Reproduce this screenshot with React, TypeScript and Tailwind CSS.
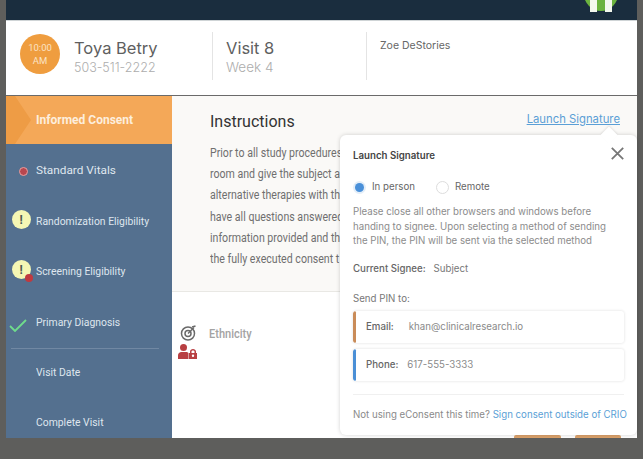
import React from "react"

const poppins = "font-['Inter','Noto_Sans',sans-serif]"

const instructionLines = [
  "Prior to all study procedures",
  "room and give the subject a",
  "alternative therapies with th",
  "have all questions answered",
  "information provided and th",
  "the fully executed consent t",
]

function Warning() {
  return (
    <span className="flex h-[19px] w-[19px] items-center justify-center rounded-full bg-[#f5f7b4] text-[12px] leading-none font-bold text-[#4d5a50]">
      !
    </span>
  )
}

function SideItem({ label, marker, wide }: { label: string; marker?: React.ReactNode; wide?: boolean }) {
  return (
    <div className="relative flex h-[50.4px] items-center pl-[30px] text-[11.8px] text-[#dfe6ee]">
      {marker && <span className="absolute top-0 left-0 flex h-full w-[30px] items-center justify-center">{marker}</span>}
      <span className={wide ? "inline-block" : "inline-block origin-left scale-x-[0.88] whitespace-nowrap"}>{label}</span>
    </div>
  )
}

function PinRow({ label, value, bar, gap }: { label: string; value: string; bar: string; gap: string }) {
  return (
    <div className="flex h-[32px] overflow-hidden rounded-[3px] bg-white shadow-[0_0_3px_rgba(0,0,0,0.14)]">
      <span className={`w-[3px] rounded-[2px] ${bar}`} />
      <div className={`flex items-center pl-[10px] text-[9.7px] ${gap}`}>
        <span className="font-medium text-[#666]">{label}</span>
        <span className="text-[#8a8a8a]">{value}</span>
      </div>
    </div>
  )
}

function Popover() {
  return (
    <div className={`absolute top-[135px] right-0 h-[300px] w-[297px] rounded-[6px] bg-white px-[13px] pt-[14px] shadow-[0_0_4px_rgba(0,0,0,0.18)] ${poppins}`}>
      <span className="absolute -top-[6px] right-[22px] h-[12px] w-[12px] rotate-45 bg-white shadow-[-1px_-1px_2px_rgba(0,0,0,0.08)]" />
      <svg className="absolute top-[12px] right-[13px]" width="13" height="13" viewBox="0 0 13 13" fill="none" stroke="#777" strokeWidth="1.8">
        <path d="M0.8 0.8 12.2 12.2M12.2 0.8 0.8 12.2" />
      </svg>
      <div className="text-[9.7px] leading-[13px] font-semibold text-[#444]">Launch Signature</div>
      <div className="mt-[18px] flex h-[14px] items-center text-[9.7px] text-[#666]">
        <span className="ml-[2px] h-[9px] w-[9px] rounded-full bg-[#4a90d9] shadow-[0_0_0_2px_#e4eef8]" />
        <span className="ml-[8px]">In person</span>
        <span className="ml-[21px] h-[13px] w-[13px] rounded-full border border-[#ddd]" />
        <span className="ml-[6px]">Remote</span>
      </div>
      <p className="mt-[11px] text-[9.7px] leading-[14.6px] whitespace-nowrap text-[#8c8c8c]">
        Please close all other browsers and windows before
        <br />
        handing to signee. Upon selecting a method of sending
        <br />
        the PIN, the PIN will be sent via the selected method
      </p>
      <div className="mt-[13px] flex text-[9.7px] leading-[14px] text-[#777]">
        <span className="font-medium text-[#666]">Current Signee:</span>
        <span className="ml-[8px]">Subject</span>
      </div>
      <div className="mt-[16px] text-[9.7px] leading-[14px] text-[#777]">Send PIN to:</div>
      <div className="mt-[5px] flex flex-col gap-[6px]">
        <PinRow label="Email:" value="khan@clinicalresearch.io" bar="bg-[#c98b58]" gap="gap-[15px]" />
        <PinRow label="Phone:" value="617-555-3333" bar="bg-[#4a8fd6]" gap="gap-[9px]" />
      </div>
      <div className="mt-[13px] border-t border-[#f0f0f0] pt-[13px] text-[9.7px] leading-[14px] whitespace-nowrap text-[#8a8a8a]">
        Not using eConsent this time? <span className="text-[#5b9fd6]">Sign consent outside of CRIO</span>
      </div>
    </div>
  )
}

export default function App() {
  return (
    <div className="h-[459px] w-[643px] overflow-hidden bg-[#5e5e5c] font-['Roboto',sans-serif]">
      <div className="relative mx-[6px] flex h-[438px] flex-col">
        {/* Top bar */}
        <div className="relative h-[20px] shrink-0 overflow-hidden bg-[#1a2d3e]">
          <svg className="absolute top-[-24px] right-[19px]" width="34" height="36" viewBox="0 0 34 36">
            <circle cx="17" cy="18" r="17" fill="#6cb33f" />
            <rect x="6" y="0" width="7" height="36" fill="#f4f8ee" />
            <rect x="21" y="0" width="7" height="36" fill="#f4f8ee" />
          </svg>
        </div>

        {/* Visit header */}
        <div className="flex h-[75px] shrink-0 items-center border-t border-[#cfd4d6] bg-white pb-[4px]">
          <div className="mb-[4px] ml-[14px] flex h-[40px] w-[40px] flex-col items-center justify-center rounded-full bg-[#ef9d3f] text-[9.5px] leading-[13px] text-[#fbe3c4]">
            <span>10:00</span>
            <span>AM</span>
          </div>
          <div className={`mt-[2px] ml-[14px] w-[138px] ${poppins}`}>
            <div className="text-[16.5px] leading-[21px] text-[#5f5f5f]">Toya Betry</div>
            <div className="text-[12.5px] leading-[17px] font-light text-[#adadad]">503-511-2222</div>
          </div>
          <div className={`flex h-[48px] w-[154px] flex-col justify-center border-l border-[#e4e4e4] pt-[2px] pl-[13px] ${poppins}`}>
            <div className="text-[16.5px] leading-[21px] text-[#5f5f5f]">Visit 8</div>
            <div className="text-[13.5px] leading-[17px] font-light text-[#adadad]">Week 4</div>
          </div>
          <div className={`h-[48px] border-l border-[#e4e4e4] pl-[13px] text-[10.5px] leading-[28px] text-[#666] ${poppins}`}>
            Zoe DeStories
          </div>
        </div>

        <div className="flex min-h-0 flex-1 border-t border-[#6a6a6a]">
          {/* Step list */}
          <aside className="w-[166px] shrink-0 bg-[#54708f]">
            <div className="relative flex h-[48px] items-center overflow-hidden bg-[#f4a858] pl-[30px] text-[12px] font-bold text-[#fdeedd]">
              <svg className="absolute top-0 left-0" width="26" height="48" viewBox="0 0 26 48">
                <path d="M0 0H9L25 24 9 48H0Z" fill="#ee9c45" />
              </svg>
              <span className="relative">Informed Consent</span>
            </div>
            <div className="pt-[2px]">
              <SideItem
                label="Standard Vitals"
                wide
                marker={<span className="ml-[4px] h-[9px] w-[9px] rounded-full border border-[#e8a0a0] bg-[#b8474f]" />}
              />
              <SideItem label="Randomization Eligibility" marker={<span className="-mt-[4px]"><Warning /></span>} />
              <SideItem
                label="Screening Eligibility"
                marker={
                  <span className="relative -mt-[4px]">
                    <Warning />
                    <span className="absolute -right-[2px] -bottom-[3px] h-[8px] w-[8px] rounded-full bg-[#c0393f]" />
                  </span>
                }
              />
              <SideItem
                label="Primary Diagnosis"
                marker={
                  <svg width="18" height="13" viewBox="0 0 18 13" fill="none" stroke="#6fdc8c" strokeWidth="1.8" className="mt-[6px] mr-[6px]">
                    <path d="M1 7 6 12 17 1" />
                  </svg>
                }
              />
              <div className="relative">
                <div className="absolute top-0 right-[13px] left-[5px] h-px bg-[#7188a3]" />
                <SideItem label="Visit Date" />
              </div>
              <SideItem label="Complete Visit" />
            </div>
          </aside>

          {/* Main panel */}
          <main className="flex min-w-0 flex-1 flex-col overflow-hidden bg-white">
            <section className="h-[196px] shrink-0 border-b border-[#e9e8e4] bg-[#faf9f7] pt-[15px] pl-[38px]">
              <div className="flex items-start pr-[17px]">
                <h1 className="text-[16px] leading-[21px] text-[#333]">Instructions</h1>
                <a className={`ml-auto text-[11.3px] leading-[16px] text-[#5b9fd6] underline ${poppins}`}>Launch Signature</a>
              </div>
              <div className="mt-[11px] origin-left scale-x-[0.883] text-[12px] leading-[21.2px] whitespace-nowrap text-[#6f6f6f]">
                {instructionLines.map((line) => (
                  <div key={line}>{line}</div>
                ))}
              </div>
            </section>
            <section className="flex items-start pt-[33px] pl-[6px]">
              <div className="flex flex-col items-center gap-[3px]">
                <svg width="16" height="16" viewBox="0 0 16 16" fill="none" stroke="#6a6a6a" strokeWidth="1.5">
                  <circle cx="8" cy="8.5" r="6.5" />
                  <circle cx="8" cy="8.5" r="3" />
                  <path d="M8 8.5 14 2.5" />
                  <path d="M12 2 15.5 1" />
                </svg>
                <svg width="19" height="15" viewBox="0 0 19 15" fill="#b83f42">
                  <circle cx="5.5" cy="3.5" r="3.5" />
                  <path d="M0 15V11.5C0 9.5 1.5 8 3.5 8H8C9 8 10 8.5 10.5 9V15Z" />
                  <path fillRule="evenodd" d="M12 9V7.5C12 6 13.5 5 15 5S18 6 18 7.5V9H19V15H11V9ZM13.5 9H16.5V7.5C16.5 7 16 6.5 15 6.5S13.5 7 13.5 7.5ZM15 10.5A1.2 1.2 0 1 0 15 12.9 1.2 1.2 0 1 0 15 10.5Z" />
                </svg>
              </div>
              <span className="mt-[1px] ml-[12px] origin-left scale-x-[0.92] text-[12px] leading-[16px] font-medium text-[#a3a3a3]">Ethnicity</span>
            </section>
            <div className="mt-auto flex justify-end gap-[14px] pr-[16px]">
              <span className="h-[3px] w-[47px] rounded-t-[2px] bg-[#dca26b]" />
              <span className="h-[3px] w-[46px] rounded-t-[2px] bg-[#dca26b]" />
            </div>
          </main>
        </div>

        <Popover />
      </div>
    </div>
  )
}
